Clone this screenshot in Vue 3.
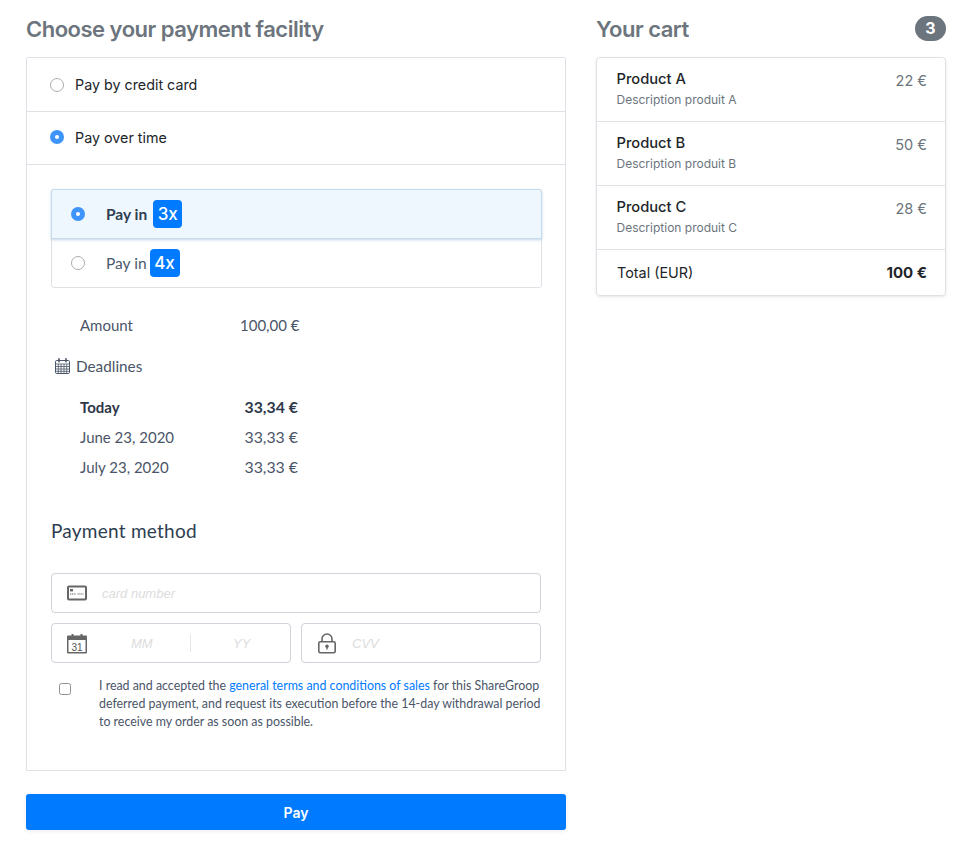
<script setup>
const products = [
  { name: 'Product A', desc: 'Description produit A', price: '22 €' },
  { name: 'Product B', desc: 'Description produit B', price: '50 €' },
  { name: 'Product C', desc: 'Description produit C', price: '28 €' },
]
const deadlines = [
  { date: 'Today', amount: '33,34 €', bold: true },
  { date: 'June 23, 2020', amount: '33,33 €' },
  { date: 'July 23, 2020', amount: '33,33 €' },
]
</script>

<template>
  <div class="page">
    <main class="left">
      <h2 class="title">Choose your payment facility</h2>
      <section class="card">
        <label class="choice first"><span class="radio"></span>Pay by credit card</label>
        <label class="choice second"><span class="radio on"></span>Pay over time</label>
        <div class="panel">
          <div class="plans">
            <div class="plan active">
              <span class="radio on"></span>
              <span class="plan-text bold">Pay in</span>
              <span class="times t3">3x</span>
            </div>
            <div class="plan">
              <span class="radio"></span>
              <span class="plan-text">Pay in</span>
              <span class="times t4">4x</span>
            </div>
          </div>

          <div class="amount line"><span class="label">Amount</span><span>100,00 €</span></div>

          <div class="deadlines-head">
            <svg class="cal-small" width="15" height="16" viewBox="0 0 15 16" fill="none" stroke="#4a5568" stroke-width="1">
              <rect x="0.5" y="2.5" width="14" height="13" rx="1.2" />
              <path d="M0.5 6h14M3.3 6v9.5M6 6v9.5M9 6v9.5M11.7 6v9.5M0.5 8.5h14M0.5 11h14M0.5 13.3h14" stroke-width="0.8" />
              <path d="M4 0.8v3M11 0.8v3" stroke-width="1.6" stroke-linecap="round" />
            </svg>
            <span>Deadlines</span>
          </div>

          <div class="schedule">
            <div v-for="d in deadlines" :key="d.date" class="line row" :class="{ strong: d.bold }">
              <span class="label">{{ d.date }}</span><span class="val">{{ d.amount }}</span>
            </div>
          </div>

          <h3 class="method">Payment method</h3>

          <div class="field full">
            <svg class="ico" width="20" height="16" viewBox="0 0 20 16">
              <rect x="1" y="1.500" width="18" height="13" rx="1" fill="#fff" stroke="#666" stroke-width="2" />
              <rect x="3" y="4" width="3" height="2.400" fill="#666" />
              <path d="M3 9h6M10.500 9h6" stroke="#666" stroke-width="1.200" stroke-dasharray="1.200 0.600" />
            </svg>
            <span class="ph num">card number</span>
          </div>

          <div class="field-row">
            <div class="field half">
              <svg class="ico" width="20" height="21" viewBox="0 0 20 21">
                <path d="M1 2.500h3.500V1h2v1.500h7V1h2v1.500H19a1 1 0 0 1 1 1V19.500a1 1 0 0 1-1 1H1a1 1 0 0 1-1-1V3.500a1 1 0 0 1 1-1z" fill="#666" />
                <rect x="1.500" y="7" width="17" height="12" fill="#fff" />
                <text x="10" y="17.500" text-anchor="middle" class="cal-num">31</text>
              </svg>
              <span class="ph mm">MM</span>
              <span class="sep"></span>
              <span class="ph yy">YY</span>
            </div>
            <div class="field half">
              <svg class="ico lock" width="20" height="21" viewBox="0 0 20 21">
                <path d="M5 9V6a5 5 0 0 1 10 0v3" fill="none" stroke="#666" stroke-width="1.600" />
                <rect x="1.800" y="8.800" width="16.400" height="11" rx="1.500" fill="#fff" stroke="#666" stroke-width="1.600" />
                <circle cx="10" cy="13.300" r="1.700" fill="#666" />
                <path d="M9.300 13.500h1.400v3h-1.400z" fill="#666" />
              </svg>
              <span class="ph cvv">CVV</span>
            </div>
          </div>

          <div class="terms">
            <span class="check"></span>
            <p>I read and accepted the <a href="#">general terms and conditions of sales</a> for this ShareGroop deferred payment, and request its execution before the 14-day withdrawal period to receive my order as soon as possible.</p>
          </div>
        </div>
      </section>
      <button class="pay" type="button">Pay</button>
    </main>

    <aside class="right">
      <div class="cart-head">
        <h2 class="title">Your cart</h2>
        <span class="count">3</span>
      </div>
      <ul class="cart">
        <li v-for="p in products" :key="p.name" class="item">
          <div>
            <div class="pname">{{ p.name }}</div>
            <div class="pdesc">{{ p.desc }}</div>
          </div>
          <span class="price">{{ p.price }}</span>
        </li>
        <li class="total"><span>Total (EUR)</span><strong>100 €</strong></li>
      </ul>
    </aside>
  </div>
</template>

<style>
html, body { margin: 0; background: #fff; }
</style>

<style scoped>
.page {
  display: flex;
  gap: 30px;
  padding: 0 26px;
  width: 972px;
  height: 858px;
  box-sizing: border-box;
  font-family: Inter, "Liberation Sans", sans-serif;
  overflow: hidden;
}
.left { width: 540px; flex: none; }
.right { width: 350px; flex: none; }

.title {
  margin: 0;
  height: 57px;
  line-height: 58px;
  font-size: 22px;
  font-weight: 600;
  color: #6c757d;
  letter-spacing: -0.5px;
}

.card {
  border: 1px solid #dee2e6;
  border-radius: 2px 2px 0 0;
  height: 714px;
  box-sizing: border-box;
}
.choice {
  display: flex;
  align-items: center;
  gap: 11px;
  padding-left: 23px;
  font-size: 14.300px;
  color: #212529;
  border-bottom: 1px solid #dee2e6;
  box-sizing: border-box;
}
.first { height: 54px; }
.second { height: 53px; padding-bottom: 2px; }

.radio {
  width: 14px;
  height: 14px;
  box-sizing: border-box;
  border: 1px solid #adadad;
  border-radius: 50%;
  background: #fff;
  flex: none;
  position: relative;
}
.radio.on {
  border: 0;
  background: #3d94fb;
}
.radio.on::after {
  content: "";
  position: absolute;
  left: 5px;
  top: 5px;
  width: 4px;
  height: 4px;
  border-radius: 50%;
  background: #fff;
}

.panel { padding: 24px 23px 0 24px; }

.plans {
  width: 491px;
  height: 99px;
  border: 1px solid #dee2e6;
  border-radius: 3px;
  box-sizing: border-box;
  font-family: Lato, sans-serif;
  color: #2d3e50;
}
.plan {
  display: flex;
  align-items: center;
  height: 48px;
  padding-left: 19px;
  font-size: 15.500px;
  color: #4a5a6c;
}
.plan.active {
  height: 50px;
  margin: -1px -1px 0;
  padding-left: 19px;
  width: 491px;
  box-sizing: border-box;
  background: #eff7fe;
  border: 1px solid #c5dcee;
  border-radius: 3px 3px 0 0;
  box-shadow: 0 1px 3px rgba(70, 120, 170, 0.3);
  position: relative;
  color: #2d3e50;
}
.plan .radio { margin-right: 21px; }
.plan-text { margin-bottom: 1px; }
.plan-text.bold { font-weight: 700; }
.times {
  display: inline-flex;
  align-items: center;
  justify-content: center;
  height: 28px;
  background: #007bff;
  color: #fff;
  border-radius: 4px;
  font-family: Inter, sans-serif;
  font-size: 17px;
  font-weight: 500;
  margin-left: 6px;
}
.t3 { width: 29px; }
.t4 { width: 30px; margin-left: 3px; }

.line {
  display: grid;
  grid-template-columns: 160px auto;
  justify-content: start;
  font-family: Lato, sans-serif;
  font-size: 15px;
  color: #4a5568;
  padding-left: 29px;
}
.amount { margin-top: 27px; line-height: 20px; }
.deadlines-head {
  display: flex;
  align-items: center;
  gap: 6px;
  margin-top: 21px;
  margin-left: 4px;
  height: 20px;
  font-family: Lato, sans-serif;
  font-size: 15.300px;
  color: #4a5568;
}
.schedule { margin-top: 16px; }
.row { height: 30px; line-height: 30px; grid-template-columns: 164.500px auto; }
.row .val { font-size: 15.800px; }
.row.strong { font-weight: 700; color: #2d3748; }

.method {
  margin: 34px 0 0;
  height: 57px;
  line-height: 30px;
  font-family: Lato, sans-serif;
  font-size: 19px;
  font-weight: 400;
  letter-spacing: 0.25px;
  color: #2d3e50;
}

.field {
  display: flex;
  align-items: center;
  height: 40px;
  border: 1px solid #ced4da;
  border-radius: 4px;
  box-sizing: border-box;
  padding-left: 15px;
}
.full { width: 490px; }
.field-row { display: flex; gap: 10px; margin-top: 10px; width: 490px; }
.half { width: 240px; }
.ico { flex: none; }
.lock { margin-left: 0; }
.cal-num { font-family: "Liberation Sans", sans-serif; font-size: 10px; fill: #555; }
.ph {
  font-family: "Liberation Sans", sans-serif;
  font-style: italic;
  font-size: 13px;
  color: #dcdcdc;
}
.num { margin-left: 15px; }
.mm { margin-left: 44px; width: 59px; }
.sep { width: 1px; height: 18px; background: #e6e6e6; }
.yy { margin-left: 42px; }
.cvv { margin-left: 15px; }

.terms {
  display: flex;
  margin-top: 14px;
  margin-left: 8px;
}
.check {
  width: 12px;
  height: 12px;
  box-sizing: border-box;
  margin-top: 6px;
  border: 1px solid #8f8f8f;
  border-radius: 2.500px;
  background: #fff;
  flex: none;
}
.terms p {
  margin: 0 0 0 28px;
  width: 444px;
  font-family: Lato, sans-serif;
  font-size: 12.400px;
  line-height: 18px;
  color: #4a5568;
}
.terms a { color: #007bff; text-decoration: none; }

.pay {
  display: block;
  width: 540px;
  height: 36px;
  margin-top: 23px;
  border: 0;
  border-radius: 3px;
  background: #007bff;
  color: #fff;
  font-family: Inter, sans-serif;
  font-size: 14px;
  font-weight: 600;
  box-shadow: 0 1px 4px rgba(0, 0, 0, 0.08);
}

.cart-head { display: flex; justify-content: space-between; align-items: flex-start; }
.count {
  width: 31px;
  height: 25px;
  margin-top: 16px;
  border-radius: 12.500px;
  background: #6c757d;
  color: #fff;
  font-size: 16px;
  font-weight: 700;
  line-height: 25px;
  text-align: center;
}
.cart {
  list-style: none;
  margin: 0;
  padding: 0;
  border: 1px solid #dee2e6;
  border-radius: 4px;
  box-shadow: 0 1px 3px rgba(0, 0, 0, 0.1);
}
.item {
  display: flex;
  justify-content: space-between;
  height: 64px;
  box-sizing: border-box;
  padding: 12px 18px 0 19.500px;
  border-bottom: 1px solid #dee2e6;
}
.pname { font-size: 14.700px; font-weight: 500; color: #212529; line-height: 19px; }
.pdesc { font-size: 12px; color: #6c757d; line-height: 15px; margin-top: 3px; }
.price { font-size: 14.500px; color: #6c757d; margin-top: 1px; line-height: 20px; }
.total {
  display: flex;
  justify-content: space-between;
  align-items: center;
  height: 45px;
  padding: 0 18px 0 20px;
  font-size: 14.400px;
  color: #212529;
}
.total strong { font-weight: 700; font-size: 15px; }
</style>
